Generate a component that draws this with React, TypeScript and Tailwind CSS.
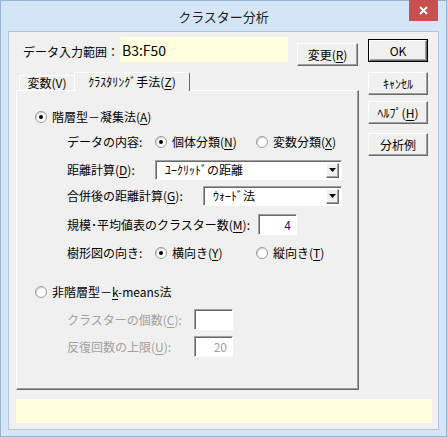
import React from "react";
import clsx from "clsx";

const raised =
  "border border-t-white border-l-white border-r-[#696969] border-b-[#696969] shadow-[inset_-1px_-1px_0_#a0a0a0] bg-[#f0f0f0]";
const sunken =
  "border border-t-[#a0a0a0] border-l-[#a0a0a0] border-r-white border-b-white shadow-[inset_1px_1px_0_#696969]";

function U({ children }: { children: React.ReactNode }) {
  return <span className="underline underline-offset-[2px]">{children}</span>;
}

function Radio({ checked }: { checked?: boolean }) {
  return (
    <span className="flex h-[12px] w-[12px] shrink-0 items-center justify-center rounded-full border border-[#9a9a9a] bg-white shadow-[inset_1px_1px_1px_#d0d0d0]">
      {checked && <span className="h-[4px] w-[4px] rounded-full bg-black" />}
    </span>
  );
}

function Btn({ children, className }: { children: React.ReactNode; className?: string }) {
  return (
    <div className={clsx("flex items-center justify-center", raised, className)}>
      {children}
    </div>
  );
}

function Select({ value, className }: { value: string; className?: string }) {
  return (
    <div className={clsx("flex h-[20px] items-center bg-white pl-[9px] pr-[2px]", sunken, className)}>
      <span className="flex-1">{value}</span>
      <span className={clsx("flex h-[15px] w-[13px] items-center justify-center", raised)}>
        <svg width="7" height="4" viewBox="0 0 7 4">
          <path d="M0 0h7L3.5 4z" fill="#000" />
        </svg>
      </span>
    </div>
  );
}

function NumBox({ value, disabled }: { value?: string; disabled?: boolean }) {
  return (
    <div
      className={clsx(
        "flex h-[21px] w-[39px] items-center justify-end pr-[5px] bg-white",
        sunken,
        disabled ? "text-[#a0a0a0]" : "text-[#1a1a80]"
      )}
    >
      {value}
    </div>
  );
}

export default function App() {
  return (
    <div className="flex h-[437px] w-[447px] flex-col border border-[#9ab4d0] bg-[#d3e5f6] font-['Noto_Sans_CJK_JP','Noto_Sans_CJK_SC',sans-serif] text-[12px] leading-[16px] text-black">
      {/* title bar */}
      <div className="grid h-[30px] grid-cols-[1fr_auto_1fr] items-start">
        <div />
        <div className="mt-[7px] text-[13px] leading-[18px] text-[#1e1e1e]">クラスター分析</div>
        <div className="flex justify-end">
          <div className="-mt-px mr-[8px] flex h-[21px] w-[29px] items-center justify-center bg-[#c75050]">
            <svg width="9" height="9" viewBox="0 0 9 9">
              <path d="M1 1l7 7M8 1L1 8" stroke="#fff" strokeWidth="1.8" />
            </svg>
          </div>
        </div>
      </div>

      {/* client */}
      <div className="mx-[7px] mb-[6px] flex flex-1 flex-col border border-[#b3c6da] bg-[#f0f0f0]">
        <div className="flex items-start">
          <div className="ml-[14px] mt-[12px] w-[97px] whitespace-nowrap">データ入力範囲：</div>
          <div className="mt-[5px] flex h-[25px] w-[168px] items-center bg-[#ffffe0] pl-[2px] text-[14px]">
            B3:F50
          </div>
          <Btn className="ml-[9px] mt-[11px] h-[23px] w-[61px]">
            変更(<U>R</U>)
          </Btn>
          <div className="ml-[10px] mt-[7px] border border-black">
            <Btn className="h-[21px] w-[58px]">OK</Btn>
          </div>
        </div>

        <div className="mt-[6px] flex items-start">
          {/* tab control */}
          <div className="ml-[7px] flex w-[343px] flex-col">
            <div className="flex h-[18px] items-end">
              <div className="ml-[3px] flex h-[15px] w-[56px] items-center justify-center rounded-t-[2px] border border-b-0 border-t-white border-l-white border-r-[#696969]">
                変数(<U>V</U>)
              </div>
              <div className="relative z-10 -mb-px -ml-px flex h-[19px] w-[116px] items-start justify-center rounded-t-[2px] border border-b-0 border-t-white border-l-white border-r-[#696969] bg-[#f0f0f0] pt-[1px]">
                ｸﾗｽﾀﾘﾝｸﾞ手法(<U>Z</U>)
              </div>
            </div>
            <div className="flex h-[300px] flex-col border border-t-white border-l-white border-r-[#696969] border-b-[#696969] shadow-[inset_-1px_-1px_0_#a0a0a0]">
              <div className="mt-[18px] flex h-[16px] items-center pl-[18px]">
                <Radio checked />
                <span className="ml-[5px]">
                  階層型－凝集法(<U>A</U>)
                </span>
              </div>

              <div className="mt-[9px] flex h-[16px] items-center pl-[50px]">
                <span className="w-[88px]">データの内容:</span>
                <div className="flex w-[101px] items-center">
                  <Radio checked />
                  <span className="ml-[5px]">
                    個体分類(<U>N</U>)
                  </span>
                </div>
                <Radio />
                <span className="ml-[5px]">
                  変数分類(<U>X</U>)
                </span>
              </div>

              <div className="mt-[10px] flex h-[20px] items-center pl-[50px]">
                <span className="w-[88px]">
                  距離計算(<U>D</U>):
                </span>
                <Select value="ﾕｰｸﾘｯﾄﾞの距離" className="w-[187px]" />
              </div>

              <div className="mt-[6px] flex h-[20px] items-center pl-[50px]">
                <span className="w-[136px]">
                  合併後の距離計算(<U>G</U>):
                </span>
                <Select value="ｳｫｰﾄﾞ法" className="w-[139px]" />
              </div>

              <div className="mt-[8px] flex h-[21px] items-center pl-[50px]">
                <span className="w-[191px] whitespace-nowrap">
                  規模･平均値表のクラスター数(<U>M</U>):
                </span>
                <NumBox value="4" />
              </div>

              <div className="mt-[10px] flex h-[16px] items-center pl-[50px]">
                <span className="w-[88px]">樹形図の向き:</span>
                <div className="flex w-[101px] items-center">
                  <Radio checked />
                  <span className="ml-[5px]">
                    横向き(<U>Y</U>)
                  </span>
                </div>
                <Radio />
                <span className="ml-[5px]">
                  縦向き(<U>T</U>)
                </span>
              </div>

              <div className="mt-[23px] flex h-[16px] items-center pl-[18px]">
                <Radio />
                <span className="ml-[5px]">
                  非階層型－<U>k</U>-means法
                </span>
              </div>

              <div className="mt-[9px] flex h-[21px] items-center pl-[50px] text-[#a0a0a0]">
                <span className="w-[127px]">
                  クラスターの個数(<U>C</U>):
                </span>
                <NumBox disabled />
              </div>

              <div className="mt-[6px] flex h-[21px] items-center pl-[50px] text-[#a0a0a0]">
                <span className="w-[127px]">
                  反復回数の上限(<U>U</U>):
                </span>
                <NumBox value="20" disabled />
              </div>
            </div>
          </div>

          {/* side buttons */}
          <div className="ml-[9px] flex w-[60px] flex-col">
            <Btn className="h-[23px]">ｷｬﾝｾﾙ</Btn>
            <Btn className="mt-[6px] h-[23px]">
              ﾍﾙﾌﾟ(<U>H</U>)
            </Btn>
            <Btn className="mt-[9px] h-[23px]">分析例</Btn>
          </div>
        </div>

        <div className="ml-[7px] mt-[9px] h-[24px] w-[416px] bg-[#ffffe0]" />
      </div>
    </div>
  );
}
